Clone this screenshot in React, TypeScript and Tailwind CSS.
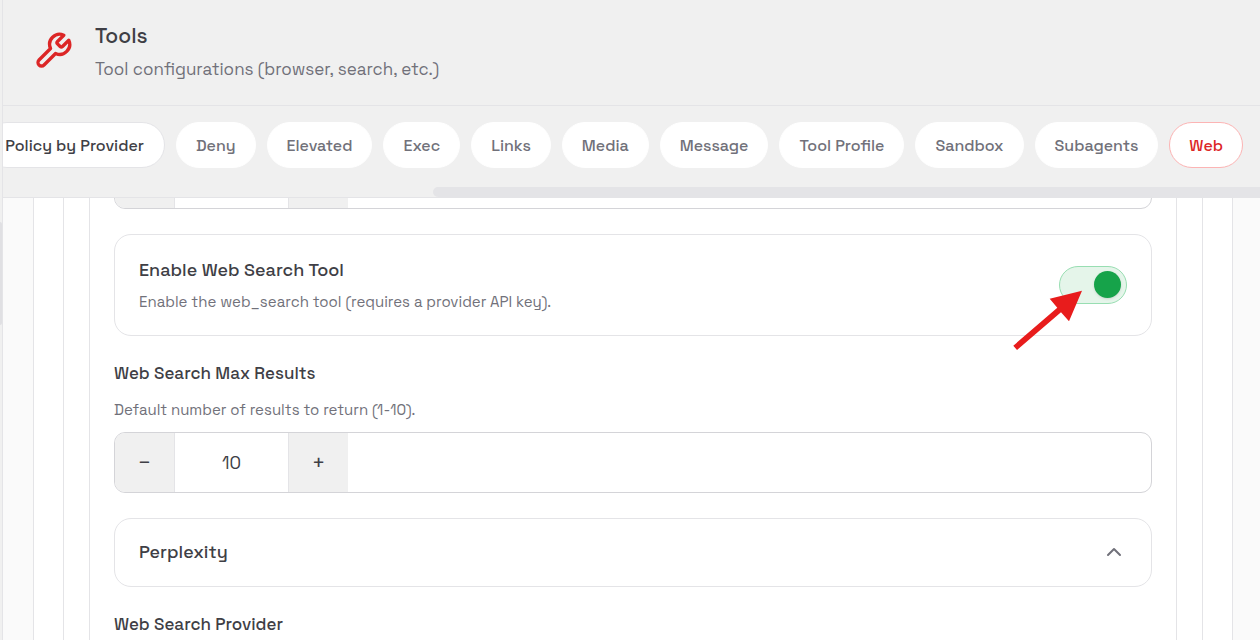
import { useState } from "react";

const TABS = [
  "Deny",
  "Elevated",
  "Exec",
  "Links",
  "Media",
  "Message",
  "Tool Profile",
  "Sandbox",
  "Subagents",
  "Web",
];

function WrenchIcon() {
  return (
    <svg viewBox="0 0 24 24" className="size-10 shrink-0" fill="none" stroke="#dc2626" strokeWidth="2" strokeLinecap="round" strokeLinejoin="round" aria-hidden="true">
      <path d="M14.7 6.3a1 1 0 0 0 0 1.4l1.6 1.6a1 1 0 0 0 1.4 0l3.77-3.77a6 6 0 0 1-7.94 7.94l-6.91 6.91a2.12 2.12 0 0 1-3-3l6.91-6.91a6 6 0 0 1 7.94-7.94l-3.76 3.76z" />
    </svg>
  );
}

function Stepper({ id, value, onChange }: { id: string; value: number; onChange: (n: number) => void }) {
  return (
    <div className="flex h-[61px] overflow-hidden rounded-[11px] border border-[#d4d4d8] bg-white">
      <button
        type="button"
        aria-label="Decrease"
        onClick={() => onChange(value - 1)}
        className="w-[60px] border-r border-[#e4e4e7] bg-[#f0f0f0] text-[22px] text-[#3f3f46]"
      >
        −
      </button>
      <input
        id={id}
        inputMode="numeric"
        value={value}
        onChange={(e) => onChange(Number(e.target.value) || 0)}
        className="w-[113px] bg-white text-center text-lg text-[#3f3f46] outline-none"
      />
      <button
        type="button"
        aria-label="Increase"
        onClick={() => onChange(value + 1)}
        className="w-[60px] border-l border-[#e4e4e7] bg-[#f0f0f0] text-[22px] text-[#3f3f46]"
      >
        +
      </button>
    </div>
  );
}

function Pointer() {
  return (
    <svg viewBox="0 0 70 61" className="pointer-events-none absolute top-6 -left-[46px] h-[61px] w-[70px]" aria-hidden="true">
      <path d="M69 .7 36.7 8.7 44.3 17.7.3 55.7 4 60 48 22.3 56 31.3z" fill="#e81c1c" />
    </svg>
  );
}

export default function App() {
  const [active, setActive] = useState("Web");
  const [timeoutSeconds, setTimeoutSeconds] = useState(30);
  const [results, setResults] = useState(10);
  const [enabled, setEnabled] = useState(true);
  const [open, setOpen] = useState(true);

  return (
    <div className="flex h-screen overflow-hidden bg-[#fafafa] font-['Space_Grotesk',Inter,sans-serif] text-[#3f3f46]">
      <aside className="flex w-[3px] shrink-0 flex-col border-r border-[#e4e4e7] bg-[#f0f0f0] pt-[222px]">
        <div className="h-[103px] rounded-r-full bg-[#e0e0e3]" />
      </aside>

      <main className="flex min-w-0 flex-1 flex-col">
        <header className="flex h-[106px] shrink-0 items-center gap-[22px] border-b border-[#e4e4e7] bg-[#f0f0f0] px-[30px] pb-[3px]">
          <WrenchIcon />
          <div>
            <h1 className="text-[21px] leading-[34px] font-medium">Tools</h1>
            <p className="mt-[2px] text-[17px] leading-7 text-[#71717a]">Tool configurations (browser, search, etc.)</p>
          </div>
        </header>

        <nav className="flex shrink-0 flex-col border-b border-[#e4e4e7] bg-[#f0f0f0] pt-4">
          <div className="flex justify-end gap-[11px] overflow-hidden pr-[17px] pb-[19px]">
            <button
              type="button"
              onClick={() => setActive("Policy")}
              className="h-[46px] shrink-0 rounded-full border border-[#e4e4e7] bg-white px-5 pt-[2px] text-base font-medium whitespace-nowrap"
            >
              Policy by Provider
            </button>
            {TABS.map((tab) => (
              <button
                key={tab}
                type="button"
                onClick={() => setActive(tab)}
                className={
                  "h-[46px] shrink-0 rounded-full border bg-white px-[19px] pt-[2px] text-base font-medium whitespace-nowrap " +
                  (tab === active ? "border-[#fcb4b4] text-[#dc2626]" : "border-white text-[#71717a]")
                }
              >
                {tab}
              </button>
            ))}
          </div>
          <div className="ml-[430px] h-[10px] rounded-l-full bg-[#e4e4e7]" />
        </nav>

        <div className="flex-1 overflow-hidden pr-[27px] pl-[30px]">
          <div className="min-h-full border-x border-[#e4e4e7] bg-white px-[29px]">
            <div className="border-x border-[#e4e4e7] px-[25px]">
              <div className="border-x border-[#e4e4e7] px-6 pb-6">
                <div className="-mt-[50px] flex flex-col gap-[25px]">
                  <Stepper id="timeout" value={timeoutSeconds} onChange={setTimeoutSeconds} />

                  <section className="flex h-[102px] items-center justify-between rounded-[17px] border border-[#e4e4e7] px-6">
                    <div>
                      <h2 id="enable" className="text-lg leading-7 font-medium">Enable Web Search Tool</h2>
                      <p className="mt-[6px] text-[15px] leading-6 text-[#71717a]">
                        Enable the web_search tool (requires a provider API key).
                      </p>
                    </div>
                    <div className="relative">
                      <button
                        type="button"
                        role="switch"
                        aria-checked={enabled}
                        aria-labelledby="enable"
                        onClick={() => setEnabled(!enabled)}
                        className={
                          "flex h-[38px] w-[68px] items-start rounded-full border px-[5px] pt-1 " +
                          (enabled ? "justify-end border-[#98deb2] bg-[#e5f5ea]" : "border-[#d4d4d8] bg-[#f0f0f0]")
                        }
                      >
                        <span className={"size-[27px] rounded-full shadow-sm " + (enabled ? "bg-[#16a34a]" : "bg-[#71717a]")} />
                      </button>
                      <Pointer />
                    </div>
                  </section>

                  <div className="flex flex-col gap-[10px]">
                    <label htmlFor="max-results" className="text-[17px] leading-[25px] font-medium">Web Search Max Results</label>
                    <p className="pt-[2px] text-[15px] leading-6 text-[#71717a]">Default number of results to return (1-10).</p>
                    <Stepper id="max-results" value={results} onChange={setResults} />
                  </div>

                  <button
                    type="button"
                    aria-expanded={open}
                    onClick={() => setOpen(!open)}
                    className="flex h-[69px] items-center justify-between rounded-[17px] border border-[#e4e4e7] pr-[26px] pb-[2px] pl-6 text-lg font-medium"
                  >
                    Perplexity
                    <svg viewBox="0 0 22 22" className={open ? "size-[22px]" : "size-[22px] rotate-180"} fill="none" stroke="#71717a" strokeWidth="2" strokeLinecap="round" strokeLinejoin="round" aria-hidden="true">
                      <path d="m5 14 6-6 6 6" />
                    </svg>
                  </button>

                  <h2 className="text-[17px] leading-[25px] font-medium">Web Search Provider</h2>
                </div>
              </div>
            </div>
          </div>
        </div>
      </main>
    </div>
  );
}
